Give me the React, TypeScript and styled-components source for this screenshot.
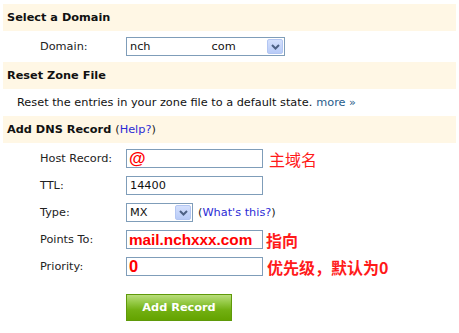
import React from "react";
import styled, { createGlobalStyle } from "styled-components";

const Global = createGlobalStyle`
  html, body { margin: 0; padding: 0; background: #fff; }
  body { font-family: "DejaVu Sans", Verdana, sans-serif; font-size: 11.3px; color: #222; }
`;

const Page = styled.div`
  width: 459px;
  padding: 4px 3px 0 3px;
  box-sizing: border-box;
`;

const Band = styled.div`
  height: 27px;
  background: #fff7e5;
  display: flex;
  align-items: center;
  padding-left: 4px;
  font-weight: bold;
  font-size: 11.3px;
  color: #111;
`;

const Help = styled.a`
  font-weight: normal;
  color: #2b2bd6;
  margin-left: 4px;
  text-decoration: none;
  span { color: #222; }
`;

const Row = styled.div<{ $h: number }>`
  height: ${(p) => p.$h}px;
  display: flex;
  align-items: center;
  padding-left: 37px;
`;

const Text = styled.div`
  height: 27px;
  display: flex;
  align-items: center;
  padding-left: 14px;
  color: #111;
`;

const More = styled.a`
  color: #1f5c8a;
  margin-left: 4px;
  text-decoration: none;
`;

const Label = styled.div`
  width: 86px;
  flex: none;
  color: #222;
`;

const Form = styled.div`
  display: flex;
  flex-direction: column;
  gap: 8px;
  padding: 6px 0 0 37px;
`;

const FormRow = styled.div`
  display: flex;
  align-items: center;
  height: 19px;
`;

const Input = styled.div<{ $w: number; $big?: number }>`
  width: ${(p) => p.$w}px;
  height: 19px;
  flex: none;
  box-sizing: border-box;
  border: 1px solid #7f9db9;
  display: flex;
  align-items: center;
  padding-left: ${(p) => (p.$big ? 2 : 3)}px;
  font-family: ${(p) => (p.$big ? '"Liberation Sans", Arial, sans-serif' : '"DejaVu Sans", Verdana, sans-serif')};
  font-size: ${(p) => (p.$big ? `${p.$big}px` : "11.3px")};
  font-weight: ${(p) => (p.$big ? "bold" : "normal")};
  color: ${(p) => (p.$big ? "#ff0000" : "#111")};
  white-space: pre;
  overflow: hidden;
`;

const Select = styled(Input)`
  justify-content: space-between;
  padding-right: 1px;
`;

const ArrowBtn = styled.div`
  width: 16px;
  height: 15px;
  background: linear-gradient(#d4e0fd, #b8cbf7);
  border: 1px solid #b3c6f2;
  box-sizing: border-box;
  border-radius: 2px;
  display: flex;
  align-items: center;
  justify-content: center;
`;

const Note = styled.span<{ $bold?: boolean; $gap: number }>`
  margin-left: ${(p) => p.$gap}px;
  font-family: "Noto Sans CJK SC", sans-serif;
  font-size: 16px;
  font-weight: ${(p) => (p.$bold ? "bold" : "normal")};
  color: #ff1a1a;
  white-space: nowrap;
`;

const What = styled.a`
  margin-left: 5px;
  color: #2b2bd6;
  text-decoration: none;
  span { color: #222; }
`;

const Button = styled.div`
  margin: 10px 0 0 86px;
  width: 106px;
  height: 27px;
  box-sizing: border-box;
  border: 1px solid #5f9a0a;
  background: linear-gradient(#b9dd7c 0%, #94c945 30%, #72b012 60%, #64a300 100%);
  color: #fff;
  font-weight: bold;
  font-size: 11.3px;
  display: flex;
  align-items: center;
  justify-content: center;
`;

const Arrow = () => (
  <ArrowBtn>
    <svg width="9" height="6" viewBox="0 0 9 6">
      <path d="M1 1 L4.5 4.5 L8 1" stroke="#4d6185" strokeWidth="2" fill="none" />
    </svg>
  </ArrowBtn>
);

export default function App() {
  return (
    <>
      <Global />
      <Page>
        <Band>Select a Domain</Band>
        <Row $h={31}>
          <Label>Domain:</Label>
          <Select $w={159}>
            <span>{"nch                 com"}</span>
            <Arrow />
          </Select>
        </Row>
        <Band>Reset Zone File</Band>
        <Text>
          Reset the entries in your zone file to a default state.
          <More>more »</More>
        </Text>
        <Band>
          Add DNS Record
          <Help>
            <span>(</span>Help?<span>)</span>
          </Help>
        </Band>
        <Form>
          <FormRow>
            <Label>Host Record:</Label>
            <Input $w={137} $big={17}>@</Input>
            <Note $gap={6}>主域名</Note>
          </FormRow>
          <FormRow>
            <Label>TTL:</Label>
            <Input $w={137}>14400</Input>
          </FormRow>
          <FormRow>
            <Label>Type:</Label>
            <Select $w={67}>
              <span>MX</span>
              <Arrow />
            </Select>
            <What>
              <span>(</span>What's this?<span>)</span>
            </What>
          </FormRow>
          <FormRow>
            <Label>Points To:</Label>
            <Input $w={137} $big={15.3}>mail.nchxxx.com</Input>
            <Note $bold $gap={3}>指向</Note>
          </FormRow>
          <FormRow>
            <Label>Priority:</Label>
            <Input $w={137} $big={16.5}>0</Input>
            <Note $bold $gap={4}>优先级，默认为0</Note>
          </FormRow>
          <Button>Add Record</Button>
        </Form>
      </Page>
    </>
  );
}
